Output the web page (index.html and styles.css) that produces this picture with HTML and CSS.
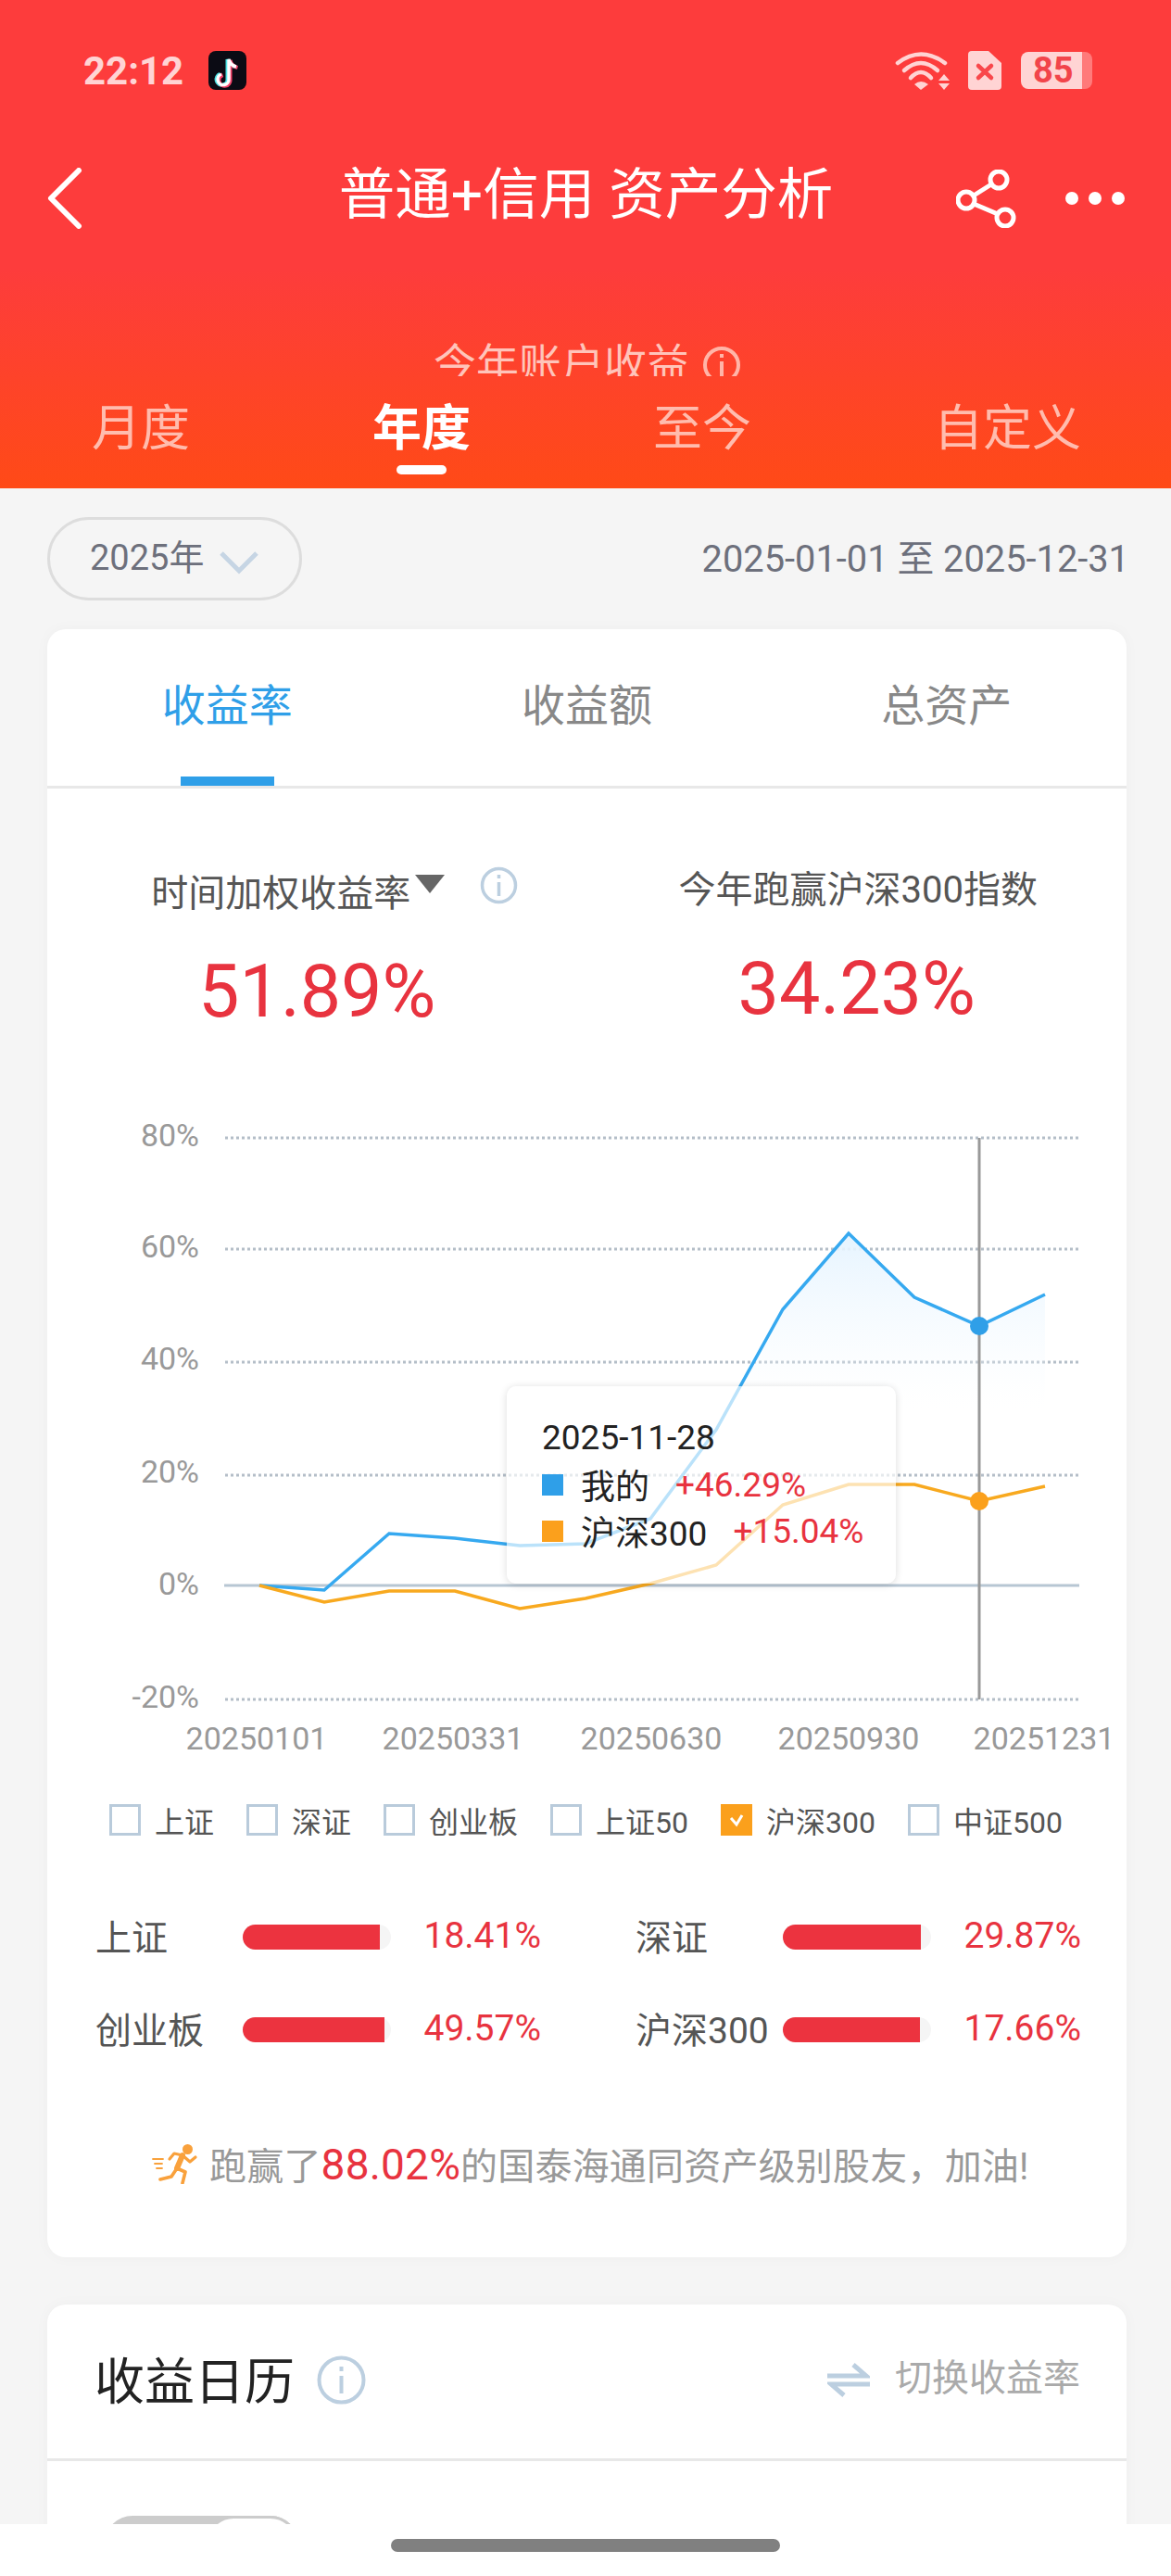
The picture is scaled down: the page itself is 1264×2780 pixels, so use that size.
FILE: index.html
```html
<!DOCTYPE html>
<html lang="zh-CN">
<head>
  <meta charset="UTF-8" />
  <meta name="viewport" content="width=device-width, initial-scale=1.0" />
  <title>普通+信用 资产分析</title>
  <link rel="stylesheet" href="styles.css">
</head>
<body>
  <div class="page">
    <header class="header">
      <div class="statusbar">
        <span class="time">22:12</span>
        <svg class="tiktok" width="41" height="42" viewBox="0 0 41 42">
          <rect width="41" height="42" rx="8" fill="#0b0b14" />
          <path d="M14 25a6 6 0 1 0 8 5V9c1 4 4 7 8 8" fill="none" stroke="#4fe3e6" stroke-width="4" transform="translate(-1.5 0)" />
          <path d="M14 25a6 6 0 1 0 8 5V9c1 4 4 7 8 8" fill="none" stroke="#f5436b" stroke-width="4" transform="translate(1.5 1)" />
          <path d="M14 25a6 6 0 1 0 8 5V9c1 4 4 7 8 8" fill="none" stroke="#fff" stroke-width="3.4" />
        </svg>
        <div class="status-icons">
          <svg width="60" height="42" viewBox="0 0 60 42" fill="none" stroke="#ffd4d4" stroke-width="4.5" stroke-linecap="round">
            <path d="M3 13Q28 -6 54 13" />
            <path d="M10 21Q28 5 46 21" />
            <path d="M17 29Q28 17 39 29" />
            <path d="M21 36Q28 30 36 36L28 42Z" fill="#ffd4d4" stroke="none" />
            <path d="M47 32L53 25L59 32ZM47 35L59 35L53 42Z" fill="#ffd4d4" stroke="none" />
          </svg>
          <svg width="36" height="42" viewBox="0 0 36 42">
            <path d="M4 0H22L36 13V38Q36 42 32 42H4Q0 42 0 38V4Q0 0 4 0Z" fill="#ffd4d4" />
            <path d="M11 16L25 29M25 16L11 29" stroke="#f9474b" stroke-width="4.5" stroke-linecap="round" />
          </svg>
          <div class="battery"><span class="battery-level">85</span><span class="battery-tip"></span></div>
        </div>
      </div>

      <nav class="navbar">
        <svg class="back" width="38" height="66" viewBox="0 0 38 66">
          <path d="M34 3L4 33L34 63" fill="none" stroke="#fff" stroke-width="6" stroke-linecap="round" stroke-linejoin="round" />
        </svg>
        <h1 class="title">普通+信用 资产分析</h1>
        <div class="nav-actions">
          <svg width="65" height="63" viewBox="0 0 65 63" fill="none" stroke="#fff" stroke-width="5">
            <circle cx="46" cy="11" r="9" />
            <circle cx="11" cy="33" r="9" />
            <circle cx="53" cy="52" r="9" />
            <path d="M38 16L19 28M19 37L45 48" />
          </svg>
          <svg width="64" height="14" viewBox="0 0 64 14" fill="#fff">
            <circle cx="7" cy="7" r="7" />
            <circle cx="32" cy="7" r="7" />
            <circle cx="57" cy="7" r="7" />
          </svg>
        </div>
      </nav>

      <div class="sub-clip">
        <div class="sub-title">
          <span>今年账户收益</span>
          <svg width="42" height="42" viewBox="0 0 42 42" fill="none" stroke="#ffb5a8" stroke-width="4">
            <circle cx="21" cy="21" r="18" />
            <path d="M21 17V33M21 9V13" />
          </svg>
        </div>
      </div>

      <div class="period-tabs">
        <div class="period-tab">月度</div>
        <div class="period-tab active">年度<i class="period-mark"></i></div>
        <div class="period-tab">至今</div>
        <div class="period-tab">自定义</div>
      </div>
    </header>

    <main class="content">
      <div class="filter-row">
        <div class="year-pill">
          <span>2025年</span>
          <svg width="44" height="26" viewBox="0 0 44 26">
            <path d="M3 3L22 22L41 3" fill="none" stroke="#c6d5e4" stroke-width="5" />
          </svg>
        </div>
        <div class="date-range">2025-01-01 至 2025-12-31</div>
      </div>

      <section class="card">
        <div class="card-tabs">
          <div class="card-tab active">收益率<i class="card-mark"></i></div>
          <div class="card-tab">收益额</div>
          <div class="card-tab">总资产</div>
        </div>

        <div class="stats">
          <div class="stat">
            <div class="stat-label stat-label-main">
              <span>时间加权收益率</span>
              <i class="caret"></i>
              <svg class="stat-info" width="41" height="41" viewBox="0 0 41 41" fill="none" stroke="#bccfe0" stroke-width="3.5">
                <circle cx="20.5" cy="20.5" r="18" />
                <path d="M20.5 17V32M20.5 9V13" />
              </svg>
            </div>
            <div class="stat-value">51.89%</div>
          </div>
          <div class="stat">
            <div class="stat-label stat-label-index">今年跑赢沪深300指数</div>
            <div class="stat-value">34.23%</div>
          </div>
        </div>

        <div class="chart">
          <svg width="1165" height="700" viewBox="51 1200 1165 700">
            <defs>
              <linearGradient id="area" x1="0" y1="1331" x2="0" y2="1520" gradientUnits="userSpaceOnUse">
                <stop offset="0" stop-color="#e6f4ff" />
                <stop offset="1" stop-color="#f6fbff" stop-opacity="0" />
              </linearGradient>
            </defs>
            <g class="grid-lines">
              <line x1="243" y1="1228" x2="1164" y2="1228" />
              <line x1="243" y1="1348" x2="1164" y2="1348" />
              <line x1="243" y1="1470" x2="1164" y2="1470" />
              <line x1="243" y1="1592" x2="1164" y2="1592" />
              <line x1="243" y1="1834" x2="1164" y2="1834" />
            </g>
            <line class="zero-line" x1="242" y1="1711" x2="1165" y2="1711" />
            <g class="y-labels">
              <text x="215" y="1237">80%</text>
              <text x="215" y="1357">60%</text>
              <text x="215" y="1478">40%</text>
              <text x="215" y="1600">20%</text>
              <text x="215" y="1721">0%</text>
              <text x="215" y="1843">-20%</text>
            </g>
            <g class="x-labels">
              <text x="277" y="1888">20250101</text>
              <text x="489" y="1888">20250331</text>
              <text x="703" y="1888">20250630</text>
              <text x="916" y="1888">20250930</text>
              <text x="1127" y="1888">20251231</text>
            </g>
            <path d="M773 1543L845 1413L916 1331.5L987 1400L1057 1431.5L1128 1397V1540H773Z" fill="url(#area)" />
            <polyline class="line-mine" points="280,1711 350,1716 420,1655 491,1660 561,1668 632,1666 702,1639 773,1543 845,1413 916,1331 987,1400 1057,1431 1128,1397" />
            <polyline class="line-index" points="280,1711 350,1729 420,1717 491,1717 561,1736 632,1725 702,1709 773,1689 845,1624 916,1602 987,1602 1057,1620 1128,1604" />
            <line class="cursor-line" x1="1057" y1="1228" x2="1057" y2="1834" />
            <circle cx="1057" cy="1431" r="10" fill="#2f9fe8" />
            <circle cx="1057" cy="1620" r="10" fill="#fba01c" />
          </svg>
          <div class="tooltip">
            <div class="tooltip-date">2025-11-28</div>
            <div class="tooltip-row"><i class="swatch swatch-mine"></i><span class="tooltip-name">我的</span><span class="up">+46.29%</span></div>
            <div class="tooltip-row"><i class="swatch swatch-index"></i><span class="tooltip-name">沪深300</span><span class="up">+15.04%</span></div>
          </div>
        </div>

        <div class="legend">
          <div class="legend-item"><i class="check"></i>上证</div>
          <div class="legend-item"><i class="check"></i>深证</div>
          <div class="legend-item"><i class="check"></i>创业板</div>
          <div class="legend-item"><i class="check"></i>上证50</div>
          <div class="legend-item">
            <i class="check checked">
              <svg width="20" height="16" viewBox="0 0 20 16"><path d="M4 6L10 13L16 3" fill="none" stroke="#fff" stroke-width="3" /></svg>
            </i>沪深300
          </div>
          <div class="legend-item"><i class="check"></i>中证500</div>
        </div>

        <div class="compare">
          <div class="compare-item">
            <span class="compare-name">上证</span>
            <div class="bar"><div class="bar-fill" style="width:92.5%"></div></div>
            <span class="compare-value">18.41%</span>
          </div>
          <div class="compare-item">
            <span class="compare-name">深证</span>
            <div class="bar"><div class="bar-fill" style="width:93.4%"></div></div>
            <span class="compare-value">29.87%</span>
          </div>
          <div class="compare-item">
            <span class="compare-name">创业板</span>
            <div class="bar"><div class="bar-fill" style="width:95.7%"></div></div>
            <span class="compare-value">49.57%</span>
          </div>
          <div class="compare-item">
            <span class="compare-name">沪深300</span>
            <div class="bar"><div class="bar-fill" style="width:92.2%"></div></div>
            <span class="compare-value">17.66%</span>
          </div>
        </div>

        <div class="note">
          <svg width="50" height="44" viewBox="0 0 50 44" fill="none" stroke="#f9a13c" stroke-linecap="round" stroke-linejoin="round">
            <circle cx="38.5" cy="6.5" r="5.5" fill="#f9a13c" stroke="none" />
            <path d="M33 13L27 27" stroke-width="6" />
            <path d="M33 13L41 20L47 15M33 13L24 11L19 17" stroke-width="3.2" />
            <path d="M27 27L36 31L33 43M27 27L21 36L9 39" stroke-width="3.6" />
            <path d="M1 17H12M3 22H11M5 27H11" stroke-width="1.8" />
          </svg>
          <span>跑赢了<b class="note-num">88.02%</b>的国泰海通同资产级别股友，加油!</span>
        </div>
      </section>

      <section class="card calendar">
        <div class="calendar-head">
          <div class="calendar-title">
            <span>收益日历</span>
            <svg width="53" height="53" viewBox="0 0 53 53" fill="none" stroke="#bccfe0" stroke-width="4">
              <circle cx="26.5" cy="26.5" r="24" />
              <path d="M26.5 22V41M26.5 12V17" />
            </svg>
          </div>
          <div class="calendar-switch">
            <svg width="46" height="39" viewBox="0 0 46 39" fill="none" stroke="#bccfe0" stroke-width="5">
              <path d="M0 15H42L28 3" />
              <path d="M46 24H4L18 36" />
            </svg>
            <span>切换收益率</span>
          </div>
        </div>
        <div class="toggle"><i class="toggle-thumb"></i></div>
      </section>
    </main>

    <div class="homebar"><i class="home-indicator"></i></div>
  </div>
</body>
</html>
```

FILE: styles.css
```css
* {
  box-sizing: border-box;
}
body {
  margin: 0;
  background: #f5f5f5;
  font-family: Roboto, "Noto Sans CJK SC", sans-serif;
}
i {
  font-style: normal;
  display: block;
}
.page {
  width: 1264px;
  height: 2780px;
  overflow: hidden;
}

/* red header */
.header {
  height: 527px;
  background: linear-gradient(#fd3c3c 55%, #ff4a17);
  color: #fff;
}
.statusbar {
  display: flex;
  align-items: center;
  height: 97px;
  padding: 55px 85px 0 90px;
}
.time {
  font-size: 42px;
  font-weight: 700;
  color: #ffd4d4;
}
.tiktok {
  margin-left: 27px;
}
.status-icons {
  display: flex;
  align-items: center;
  gap: 19px;
  margin-left: auto;
}
.battery {
  display: flex;
  align-items: stretch;
  height: 40px;
  margin-left: 2px;
}
.battery-level {
  width: 66px;
  padding-left: 13px;
  border-radius: 8px 0 0 8px;
  background: #ffd4d4;
  color: #f2444a;
  font-size: 38px;
  font-weight: 700;
  line-height: 40px;
}
.battery-tip {
  width: 11px;
  border-radius: 0 8px 8px 0;
  background: #ff7a7a;
}
.navbar {
  display: grid;
  grid-template-columns: 1fr auto 1fr;
  align-items: center;
  height: 66px;
  margin-top: 84px;
  padding: 0 50px 0 51px;
}
.title {
  margin: 0;
  font-size: 60.5px;
  font-weight: 400;
  line-height: 66px;
  position: relative;
  top: -3px;
}
.nav-actions {
  display: flex;
  align-items: center;
  justify-content: flex-end;
  gap: 53px;
}
.sub-clip {
  height: 159px;
  padding-top: 112px;
  overflow: hidden;
}
.sub-title {
  display: flex;
  justify-content: center;
  align-items: center;
  gap: 14px;
  height: 60px;
  padding-left: 4px;
  font-size: 46px;
  color: #ffc4ba;
}
.sub-title svg {
  margin-top: 10px;
}
.period-tabs {
  display: flex;
  justify-content: space-between;
  align-items: flex-start;
  height: 121px;
  padding: 27px 97px 0 99px;
}
.period-tab {
  display: flex;
  flex-direction: column;
  align-items: center;
  font-size: 53px;
  line-height: 60px;
  color: #ffbcae;
}
.period-tab.active {
  color: #fff;
  font-weight: 700;
}
.period-mark {
  width: 54px;
  height: 10px;
  margin-top: 9px;
  border-radius: 5px;
  background: #fff;
}

/* content */
.content {
  height: 2197px;
  padding: 31px 48px 0 51px;
  overflow: hidden;
}
.filter-row {
  display: flex;
  justify-content: space-between;
  align-items: center;
  height: 90px;
  margin-bottom: 31px;
}
.year-pill {
  display: flex;
  align-items: center;
  gap: 16px;
  width: 275px;
  height: 90px;
  padding-left: 43px;
  border: 3px solid #dddddd;
  border-radius: 45px;
  font-size: 38px;
  color: #6d707c;
}
.year-pill span {
  margin-top: -10px;
}
.year-pill svg {
  margin-top: 8px;
}
.date-range {
  margin: -8px -3px 0 0;
  font-size: 39.8px;
  color: #6d707c;
}
.card {
  background: #fff;
  border-radius: 20px;
  box-shadow: 0 0 16px rgba(0,0,0,0.03);
}
.card-tabs {
  display: grid;
  grid-template-columns: repeat(3, 1fr);
  height: 172px;
  border-bottom: 3px solid #e8e8e8;
}
.card-tab {
  display: flex;
  flex-direction: column;
  align-items: center;
  justify-content: space-between;
  padding-top: 53px;
  font-size: 47px;
  line-height: 60px;
  color: #888888;
}
.card-tab.active {
  color: #2f9fe8;
}
.card-mark {
  width: 101px;
  height: 10px;
  background: #2f9fe8;
}
.stats {
  display: grid;
  grid-template-columns: repeat(2, 1fr);
  padding-top: 85px;
  margin-bottom: 85px;
}
.stat {
  text-align: center;
}
.stat-label {
  display: flex;
  justify-content: center;
  align-items: center;
  height: 48px;
  font-size: 40px;
  color: #555555;
}
.stat-label-main {
  padding: 2px 0 0 38px;
}
.stat-label-index {
  margin-top: -3px;
  margin-bottom: 3px;
  padding-left: 3px;
}
.caret {
  width: 0;
  height: 0;
  margin: -14px 0 0 5px;
  border-left: 16px solid transparent;
  border-right: 16px solid transparent;
  border-top: 20px solid #666666;
}
.stat-info {
  margin: -12px 0 0 38px;
}
.stat-value {
  margin-top: 41px;
  font-size: 79px;
  line-height: 90px;
  color: #e8333f;
}

/* chart */
.chart {
  position: relative;
  height: 700px;
}
.chart svg {
  display: block;
}
.grid-lines line {
  stroke: #b4bec8;
  stroke-width: 3;
  stroke-dasharray: 3 3;
}
.zero-line {
  stroke: #b7c6d3;
  stroke-width: 3;
}
.y-labels text {
  font-size: 34px;
  fill: #999999;
  text-anchor: end;
}
.x-labels text {
  font-size: 34px;
  fill: #999999;
  text-anchor: middle;
}
.line-mine,
.line-index {
  fill: none;
  stroke-width: 3.5;
}
.line-mine {
  stroke: #36a9f0;
}
.line-index {
  stroke: #f8a91f;
}
.cursor-line {
  stroke: #999999;
  stroke-width: 3;
}
.tooltip {
  position: absolute;
  left: 496px;
  top: 296px;
  width: 420px;
  height: 213px;
  padding: 36px 20px 0 38px;
  border-radius: 10px;
  background: rgba(255,255,255,0.66);
  box-shadow: 0 1px 8px rgba(0,0,0,0.14);
  color: #222222;
  font-size: 37px;
}
.tooltip-date {
  line-height: 40px;
}
.tooltip-row {
  display: flex;
  align-items: center;
  height: 50px;
  white-space: nowrap;
}
.tooltip-date + .tooltip-row {
  margin-top: 5px;
}
.swatch {
  flex: none;
  width: 23px;
  height: 23px;
  margin-right: 19px;
}
.swatch-mine {
  background: #2f9fe8;
}
.swatch-index {
  background: #fba01c;
}
.tooltip-name {
  margin-right: 28px;
}
.up {
  color: #e8333f;
}

/* legend and index compare */
.legend {
  display: flex;
  align-items: center;
  gap: 35px;
  height: 40px;
  margin-top: 44px;
  padding-left: 67px;
}
.legend-item {
  display: flex;
  align-items: center;
  gap: 15px;
  font-size: 32px;
  color: #555555;
  white-space: nowrap;
}
.check {
  display: flex;
  justify-content: center;
  align-items: center;
  width: 34px;
  height: 34px;
  border: 3px solid #b9cbdb;
}
.check.checked {
  border: 0;
  background: #fba01c;
}
.compare {
  display: grid;
  grid-template-columns: 479px 479px;
  column-gap: 104px;
  row-gap: 40px;
  margin-top: 76px;
  padding-left: 52px;
}
.compare-item {
  display: flex;
  align-items: center;
  height: 60px;
}
.compare-name {
  width: 159px;
  margin-top: -4px;
  font-size: 39px;
  color: #555555;
  white-space: nowrap;
}
.bar {
  width: 160px;
  height: 27px;
  border-radius: 14px;
  background: #f5f5f5;
}
.bar-fill {
  height: 27px;
  border-radius: 14px 0 0 14px;
  background: #ec333f;
}
.compare-value {
  margin: -2px -2px 0 auto;
  font-size: 39px;
  color: #e8333f;
}
.note {
  display: flex;
  align-items: center;
  gap: 12px;
  height: 60px;
  margin-top: 85px;
  padding-left: 113px;
  font-size: 40px;
  letter-spacing: 0.2px;
  color: #999999;
  white-space: nowrap;
}
.note-num {
  font-size: 46px;
  font-weight: 400;
  color: #e8333f;
}
.card:first-of-type {
  padding-bottom: 71px;
}

/* calendar card */
.calendar {
  margin-top: 51px;
  padding-bottom: 0;
}
.calendar-head {
  display: flex;
  justify-content: space-between;
  align-items: center;
  height: 169px;
  padding: 0 50px 8px 51px;
  border-bottom: 3px solid #e8e8e8;
}
.calendar-title {
  display: flex;
  align-items: center;
  gap: 24px;
  font-size: 54px;
  color: #222222;
}
.calendar-title svg {
  margin-top: 5px;
}
.calendar-switch {
  display: flex;
  align-items: center;
  gap: 27px;
  font-size: 40px;
  color: #aaaaaa;
}
.calendar-switch svg {
  margin-top: 4px;
}
.calendar-switch span {
  margin-top: -6px;
}
.toggle {
  position: relative;
  width: 209px;
  height: 60px;
  margin: 59px 0 0 62px;
  border-radius: 30px;
  background: #cccccc;
}
.toggle-thumb {
  position: absolute;
  right: 0;
  top: 0;
  width: 100px;
  height: 60px;
  border: 3px solid #cccccc;
  border-radius: 30px;
  background: #fff;
}
.homebar {
  display: flex;
  justify-content: center;
  height: 56px;
  padding-top: 16px;
  background: #fff;
}
.home-indicator {
  width: 420px;
  height: 14px;
  border-radius: 7px;
  background: #808080;
}
```
